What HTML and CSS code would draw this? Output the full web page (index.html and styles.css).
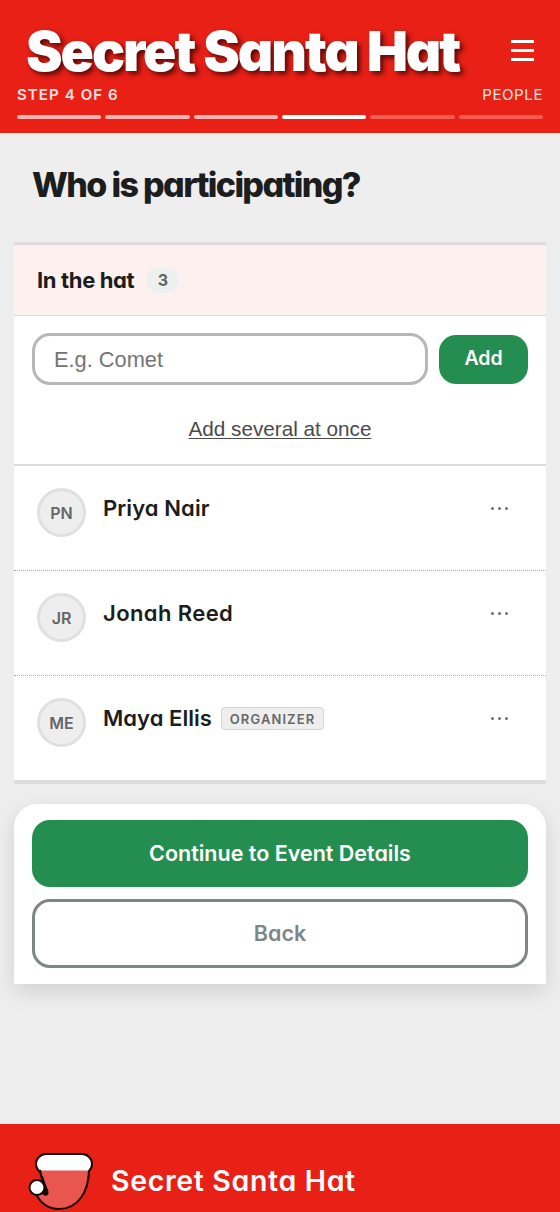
FILE: index.html
```html
<!DOCTYPE html>
<html lang="en">
<head>
<meta charset="utf-8">
<title>Secret Santa Hat</title>
<link rel="stylesheet" href="styles.css">
</head>
<body>
<header class="top">
  <div class="brand-row">
    <div class="brand"><span class="t-brand">Secret Santa Hat</span></div>
    <button class="menu" aria-label="Menu"><i></i><i></i><i></i></button>
  </div>
  <div class="step-row"><span class="step t-step">STEP 4 OF 6</span><span class="step-name t-people">PEOPLE</span></div>
  <div class="progress"><i class="done"></i><i class="done"></i><i class="done"></i><i class="now"></i><i></i><i></i></div>
</header>
<main>
  <h1><span class="t-h1">Who is participating?</span></h1>
  <section class="card">
    <div class="card-head"><h2 class="t-h2">In the hat</h2><span class="count">3</span></div>
    <div class="entry">
      <div class="entry-row">
        <input class="field" type="text" placeholder="E.g. Comet">
        <button class="add"><span class="t-add">Add</span></button>
      </div>
      <a class="several">Add several at once</a>
    </div>
    <ul class="people">
      <li><span class="avatar">PN</span><span class="name t-priya">Priya Nair</span><span class="more"><i></i><i></i><i></i></span></li>
      <li><span class="avatar">JR</span><span class="name t-jonah">Jonah Reed</span><span class="more"><i></i><i></i><i></i></span></li>
      <li><span class="avatar">ME</span><span class="name t-maya">Maya Ellis</span><span class="tag">ORGANIZER</span><span class="more"><i></i><i></i><i></i></span></li>
    </ul>
  </section>
  <section class="actions">
    <button class="primary"><span class="t-continue">Continue to Event Details</span></button>
    <button class="secondary"><span class="t-back">Back</span></button>
  </section>
</main>
<footer>
  <svg class="hat" width="66" height="60" viewBox="0 0 66 60">
    <path d="M12 17 C13 24 15 31 19 39 L8 42 C13 52 21 57 31 57 C49 57 61 41 61 17 Z" fill="#e95650"/>
    <path d="M8 42 L18 38 L12 30 L4 36 Z" fill="#e82016"/>
    <path d="M8 42 C13 52 21 57 31 57 C49 57 61 41 61 17" fill="none" stroke="#160404" stroke-width="2"/>
    <path d="M12 17 C13 24 16 32 19 39 C20 43 17 43 15 41" fill="none" stroke="#160404" stroke-width="2.6" stroke-linecap="round"/>
    <path d="M13 28 L20 39 C20 44 16 43 14 40 Z" fill="#160404"/>
    <rect x="8" y="2" width="56" height="20" rx="10" fill="#fff" stroke="#160404" stroke-width="2"/>
    <path d="M12.500 18 H60.500 L60 24 H13.500 Z" fill="#e95650"/>
    <path d="M12 16 H61 L60.500 18.500 H12.500 Z" fill="#fff"/>
    <path d="M12 18 L13.500 25 M61 18 L60.500 25" fill="none" stroke="#160404" stroke-width="2"/>
    <circle cx="9" cy="35.500" r="7.500" fill="#fff" stroke="#160404" stroke-width="2"/>
  </svg>
  <span class="foot-name t-foot">Secret Santa Hat</span>
</footer>
</body>
</html>
```
FILE: styles.css
```css
* { box-sizing: border-box; margin: 0; padding: 0; }
body { width: 560px; height: 1212px; overflow: hidden; background: #eee; color: #1c1d1d; font-family: Inter, sans-serif; font-feature-settings: "cv11"; display: flex; flex-direction: column; }
button { border: 0; background: none; font: inherit; font-feature-settings: inherit; }
span, h2, a { white-space: nowrap; }

.top { height: 133px; background: #e82016; color: #fff; padding: 16px 17px 0; flex: none; }
.brand-row { display: flex; justify-content: space-between; height: 69px; }
.brand { padding-left: 9px; font-size: 55px; line-height: 70px; font-weight: 900; text-shadow: 3px 3px 5px rgba(40, 0, 0, .75); }
.t-brand { letter-spacing: -2.05px; }
.menu { width: 23px; margin: 24px 9px 0 0; display: flex; flex-direction: column; gap: 6px; }
.menu i { height: 3px; background: #fff; flex: none; }
.step-row { display: flex; justify-content: space-between; height: 20px; font-size: 15px; line-height: 20px; color: #fde4e2; }
.step { font-weight: 600; }
.t-step { letter-spacing: 1.1px; }
.t-people { letter-spacing: .6px; }
.progress { display: grid; grid-template-columns: repeat(6, 1fr); gap: 4px; margin-top: 10px; }
.progress i { height: 4px; border-radius: 2px; background: #f45c56; }
.progress .done { background: #fab5b2; }
.progress .now { background: #fff; }

main { padding: 0 14px; height: 991px; flex: none; }
h1 { height: 109px; padding: 31px 0 0 18px; font-size: 34px; line-height: 42px; font-weight: 800; }
.t-h1 { letter-spacing: -1.65px; }
.card { background: #fff; border-top: 3px solid #ddd; border-bottom: 4px solid #dcdcdc; height: 542px; }
.card-head { height: 71px; background: #fdf1f0; border-bottom: 1px solid #e9d3d3; display: flex; align-items: center; padding-left: 23px; gap: 12px; }
h2 { font-size: 22px; line-height: 28px; font-weight: 700; }
.t-h2 { letter-spacing: -.35px; }
.count { width: 33px; height: 25px; border-radius: 13px; background: #edf0ee; color: #606262; font-size: 16px; font-weight: 700; line-height: 25px; text-align: center; }
.entry { height: 150px; padding: 17px 18px 0; border-bottom: 2px solid #ddd; display: flex; flex-direction: column; align-items: center; }
.entry-row { display: flex; align-items: center; gap: 11px; width: 100%; }
.field { width: 396px; height: 52px; border: 3px solid #b7b7b7; border-radius: 18px; padding: 2px 19px 0; font: 21.8px "Liberation Sans", sans-serif; color: #222; background: #fff; }
.field::placeholder { color: #757575; }
.add { flex: 1; height: 49px; border-radius: 17px; background: #248e50; color: #fff; font-size: 19.5px; font-weight: 600; padding-bottom: 2px; }
.several { margin-top: 32px; font: 20.7px/24px "Liberation Sans", sans-serif; text-decoration: underline; text-underline-offset: 2px; text-decoration-thickness: 1px; color: #4a4a4a; }
.people { list-style: none; }
.people li { height: 105px; display: flex; align-items: flex-start; padding: 22px 37px 0 23px; border-bottom: 1px dotted #aaa; }
.people li:last-child { border: 0; }
.avatar { width: 49px; height: 49px; border: 3px solid #e0e0e0; border-radius: 50%; background: #eee; color: #666; font-size: 16px; font-weight: 600; line-height: 44px; text-align: center; }
.name { margin-left: 17px; font-size: 22px; line-height: 30px; font-weight: 600; margin-top: 5px; }
.t-priya { letter-spacing: .1px; }
.t-jonah { letter-spacing: .4px; }
.t-maya { letter-spacing: .05px; }
.tag { width: 103px; height: 23px; margin: 9px 0 0 9px; border: 1px solid #d5d5d5; border-radius: 4px; background: #eee; color: #686868; font-size: 13px; font-weight: 600; line-height: 22px; letter-spacing: 1.1px; text-align: center; }
.more { margin: 19px 0 0 auto; display: flex; gap: 4px; padding-right: 1px; }
.more i { width: 3px; height: 3px; border-radius: 50%; background: #707070; }
.actions { margin-top: 20px; height: 180px; background: #fff; border-radius: 23px 23px 0 0; padding: 16px 18px; display: flex; flex-direction: column; gap: 12px; box-shadow: 0 7px 22px rgba(0, 0, 0, .13); }
.primary, .secondary { font-size: 21.5px; font-weight: 600; border-radius: 18px; flex: none; padding-bottom: 2px; }
.primary { height: 67px; background: #248e50; color: #fff; }
.secondary { height: 69px; border: 3px solid #7d8784; color: #7e8785; }

footer { height: 88px; background: #e82016; color: #fff; display: flex; align-items: flex-start; padding: 28px 0 0 28px; flex: none; }
.foot-name { margin: 11px 0 0 17px; font-size: 28.5px; line-height: 36px; font-weight: 600; letter-spacing: .65px; }
```
